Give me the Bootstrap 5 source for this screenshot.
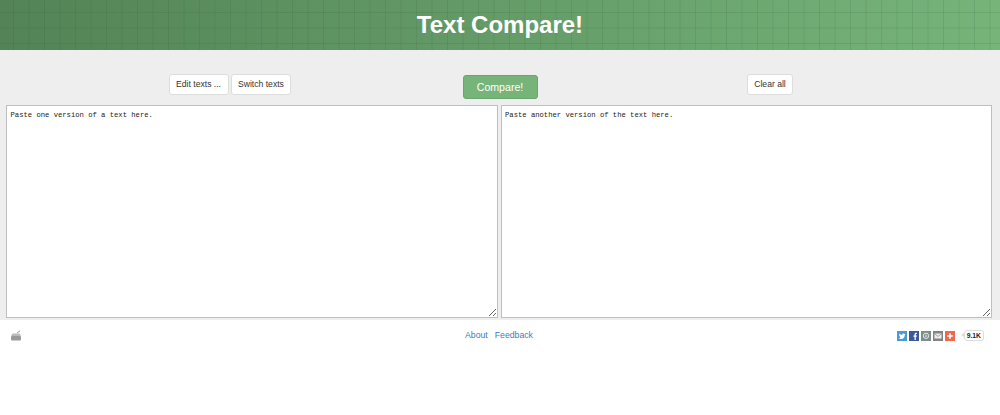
<!DOCTYPE html>
<html lang="en">
<head>
    <meta charset="UTF-8">
    <meta name="viewport" content="width=device-width, initial-scale=1.0">
    <title>Text Compare!</title>
    <link href="https://cdn.jsdelivr.net/npm/bootstrap@5.3.2/dist/css/bootstrap.min.css" rel="stylesheet">
    <style>
        body {
            font-family: "Liberation Sans", Arial, sans-serif;
            background: #fff;
        }
        .site-head {
            height: 50px;
            background:
                repeating-linear-gradient(90deg, transparent 0 12.5px, rgba(40,80,45,.13) 13.5px, transparent 14.5px 15.5px),
                repeating-linear-gradient(180deg, transparent 0 11.5px, rgba(40,80,45,.13) 12.5px, transparent 13.5px 15.5px),
                linear-gradient(90deg, #538356, #76b47a);
        }
        .site-title {
            font-size: 24px;
            font-weight: 700;
            line-height: 50px;
            color: #fff;
        }
        .work-area {
            height: 270px;
            background: #eee;
        }
        .tool-row {
            gap: 2.5px;
            padding-top: 24px;
            height: 55px;
        }
        .tool-side {
            flex: 1 1 0;
            gap: 2px;
        }
        .tool-btn {
            font-size: 8.6px;
            line-height: 19px;
            height: 21px;
            padding: 0 6.5px;
            color: #333;
            background: #fff;
            border: 1px solid #ddd;
            border-radius: 3px;
        }
        .compare-btn {
            width: 75px;
            height: 24px;
            margin-top: 1px;
            padding: 0;
            font-size: 10.6px;
            line-height: 22px;
            color: #fff;
            background: #76b47a;
            border: 1px solid #69a56d;
            border-radius: 3px;
        }
        .compare-btn:hover {
            color: #fff;
            background: #69a56d;
            border-color: #69a56d;
        }
        .text-panes {
            gap: 3px;
            padding: 0 8px 0 6px;
        }
        .text-pane {
            flex: 1 1 0;
            min-width: 0;
            height: 213px;
            padding: 5px 3.5px;
            font-family: "Liberation Mono", "Courier New", monospace;
            font-size: 7.2px;
            line-height: 9px;
            color: #222;
            background: #fff;
            border: 1px solid #bfbfbf;
            border-radius: 0;
            outline: none;
        }
        .site-foot {
            height: 31px;
            padding: 0 16px 0 10px;
        }
        .foot-side {
            flex: 1 1 0;
        }
        .foot-links {
            gap: 7px;
            padding-left: 4px;
            font-size: 8.7px;
        }
        .foot-links a {
            color: #3a80c0;
            text-decoration: none;
        }
        .share-icons {
            gap: 2px;
        }
        .share-icon {
            display: block;
            width: 10px;
            height: 10px;
        }
        .share-count {
            position: relative;
            margin-left: 9px;
            padding: 0 2px;
            font-size: 6.8px;
            font-weight: 700;
            line-height: 9px;
            color: #222;
            background: #fff;
            border: 1px solid #ddd;
            border-radius: 3px;
        }
        .share-count::before {
            content: "";
            position: absolute;
            left: -4px;
            top: 2px;
            border-style: solid;
            border-width: 2.5px 3px 2.5px 0;
            border-color: transparent #ddd transparent transparent;
        }
    </style>
</head>
<body>
    <header class="site-head text-center">
        <div class="site-title">Text Compare!</div>
    </header>

    <main class="work-area">
        <div class="tool-row d-flex">
            <div class="tool-side d-flex justify-content-center align-items-start">
                <button type="button" class="btn tool-btn">Edit texts ...</button>
                <button type="button" class="btn tool-btn">Switch texts</button>
            </div>
            <div>
                <button type="button" class="btn compare-btn">Compare!</button>
            </div>
            <div class="tool-side d-flex justify-content-center align-items-start">
                <button type="button" class="btn tool-btn">Clear all</button>
            </div>
        </div>
        <div class="text-panes d-flex">
            <textarea class="text-pane" spellcheck="false">Paste one version of a text here.</textarea>
            <textarea class="text-pane" spellcheck="false">Paste another version of the text here.</textarea>
        </div>
    </main>

    <footer class="site-foot d-flex align-items-center">
        <div class="foot-side d-flex">
            <!-- little printer/eraser mark -->
            <svg width="12" height="11" viewBox="0 0 12 11" aria-hidden="true">
                <path d="M7 3 10 .8" stroke="#999" fill="none"/>
                <path d="M2.5 3.5H9.5L11 6H1Z" fill="#bbb"/>
                <rect x="1" y="6" width="10" height="4.5" rx="1" fill="#999"/>
            </svg>
        </div>
        <nav class="foot-links d-flex">
            <a href="#">About</a>
            <a href="#">Feedback</a>
        </nav>
        <div class="foot-side d-flex justify-content-end align-items-center">
            <div class="share-icons d-flex">
                <svg class="share-icon" viewBox="0 0 10 10" aria-label="Twitter">
                    <rect width="10" height="10" fill="#4a9ad4"/>
                    <path d="M1.6 7.4C4.6 8.8 8 7.4 7.8 3.7L8.6 2.9 7.6 3C7.1 2.2 5.2 2.3 5.2 4 4 4 3 3.4 2.2 2.6 1.9 3.4 2.1 4.1 2.7 4.6L2.1 4.5C2.2 5.2 2.6 5.6 3.2 5.8L2.7 5.9C2.9 6.4 3.3 6.7 3.9 6.7 3.2 7.2 2.4 7.4 1.6 7.4Z" fill="#fff"/>
                </svg>
                <svg class="share-icon" viewBox="0 0 10 10" aria-label="Facebook">
                    <rect width="10" height="10" fill="#3b5998"/>
                    <path d="M5.5 9V5.7H4.4V4.4H5.5V3.5C5.5 2.4 6.1 1.8 7.1 1.8H7.9V3H7.3C6.9 3 6.8 3.2 6.8 3.5V4.4H7.9L7.7 5.7H6.8V9Z" fill="#fff"/>
                </svg>
                <svg class="share-icon" viewBox="0 0 10 10" aria-label="Print">
                    <rect width="10" height="10" fill="#7d8c8c"/>
                    <circle cx="5" cy="4.8" r="2.7" fill="none" stroke="#e3e8e8" stroke-width="1"/>
                    <path d="M3.8 4.2H6.2M3.8 5.4H6.2" stroke="#e3e8e8" stroke-width=".7"/>
                </svg>
                <svg class="share-icon" viewBox="0 0 10 10" aria-label="Email">
                    <rect width="10" height="10" fill="#848484"/>
                    <rect x="1.5" y="2.5" width="7" height="5" fill="#eee"/>
                    <path d="M1.5 2.8 5 5.4 8.5 2.8" fill="none" stroke="#848484" stroke-width=".7"/>
                </svg>
                <svg class="share-icon" viewBox="0 0 10 10" aria-label="More">
                    <rect width="10" height="10" fill="#f0674a"/>
                    <path d="M5 2.2V7.8M2.2 5H7.8" stroke="#fff" stroke-width="1.6"/>
                </svg>
            </div>
            <span class="share-count">9.1K</span>
        </div>
    </footer>
    <script src="https://cdn.jsdelivr.net/npm/bootstrap@5.3.2/dist/js/bootstrap.bundle.min.js"></script>
</body>
</html>
